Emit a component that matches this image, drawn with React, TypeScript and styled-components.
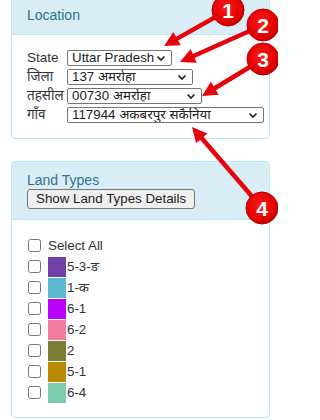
import React from 'react';
import styled, { createGlobalStyle } from 'styled-components';

const GlobalStyle = createGlobalStyle`
  html, body {
    margin: 0;
    padding: 0;
    background: #fff;
  }
  body {
    font-family: "Liberation Sans", Arial, "Noto Sans", sans-serif;
    font-size: 13px;
    color: #333;
  }
`;

const Page = styled.div`
  position: relative;
  width: 278px;
  height: 420px;
  overflow: hidden;
  padding-left: 11px;
  box-sizing: border-box;
`;

const Panel = styled.div<{ $top: number }>`
  width: 259px;
  margin-top: ${(p) => p.$top}px;
  border: 1px solid #bce8f1;
  border-radius: 4px;
  background: #fff;
  box-sizing: border-box;
  overflow: hidden;
`;

const PanelHeading = styled.div`
  background: #d9edf7;
  color: #31708f;
  border-bottom: 1px solid #bce8f1;
  padding: 10px 15px 10px 15px;
  font-size: 14px;
  line-height: 17px;
`;

const LocationBody = styled.div`
  padding: 15px 0 15px 15px;
  display: grid;
  grid-template-columns: 40px auto;
  grid-auto-rows: 16px;
  row-gap: 3px;
  align-items: center;
`;

const FieldLabel = styled.span`
  font-size: 13.5px;
  line-height: 16px;
  white-space: nowrap;
  color: #333;
`;

const SelectBox = styled.div<{ $w: number }>`
  width: ${(p) => p.$w}px;
  height: 16px;
  box-sizing: border-box;
  border: 1px solid #767676;
  border-radius: 2px;
  background: #fff;
  display: flex;
  align-items: center;
  justify-content: space-between;
  padding: 0 5px 0 4px;
  font-size: 13.33px;
  line-height: 14px;
  color: #222;
  white-space: nowrap;
  overflow: hidden;
`;

const Chevron = () => (
  <svg width="10" height="7" viewBox="0 0 10 7">
    <path d="M1.5 1.5 L5 5 L8.5 1.5" fill="none" stroke="#222" strokeWidth="1.7" />
  </svg>
);

const DetailsButton = styled.button`
  display: block;
  margin-top: 0;
  height: 20px;
  padding: 0 8px;
  border: 1px solid #767676;
  border-radius: 3px;
  background: #efefef;
  color: #222;
  font-family: inherit;
  font-size: 13.33px;
  line-height: 18px;
`;

const TypesBody = styled.div`
  padding: 15px 0 14px 16px;
  display: flex;
  flex-direction: column;
`;

const TypeRow = styled.div`
  display: flex;
  align-items: center;
  height: 21px;
  font-size: 13.33px;
  line-height: 16px;
  color: #333;
`;

const CheckBox = styled.span`
  width: 13px;
  height: 13px;
  box-sizing: border-box;
  border: 1px solid #767676;
  border-radius: 2.5px;
  background: #fff;
  margin-right: 7px;
  flex: none;
`;

const Swatch = styled.span<{ $color: string }>`
  width: 18px;
  height: 20px;
  background: ${(p) => p.$color};
  margin-right: 1px;
  flex: none;
`;

const Overlay = styled.svg`
  position: absolute;
  left: 0;
  top: 0;
  pointer-events: none;
`;

const locations = [
  { label: 'State', value: 'Uttar Pradesh', w: 105 },
  { label: 'जिला', value: '137 अमरोहा', w: 126 },
  { label: 'तहसील', value: '00730 अमरोहा', w: 135 },
  { label: 'गाँव', value: '117944 अकबरपुर सकैनिया', w: 197 },
];

const landTypes = [
  { name: '5-3-ङ', color: '#6f42a8' },
  { name: '1-क', color: '#5bbad0' },
  { name: '6-1', color: '#b800ff' },
  { name: '6-2', color: '#f27ba2' },
  { name: '2', color: '#7a7d32' },
  { name: '5-1', color: '#b98900' },
  { name: '6-4', color: '#7dcbad' },
];

const callouts = [
  { n: '1', cx: 228, cy: 10, tx: 164, ty: 46 },
  { n: '2', cx: 263, cy: 25, tx: 180, ty: 62 },
  { n: '3', cx: 263, cy: 59, tx: 202, ty: 96 },
  { n: '4', cx: 262, cy: 208, tx: 192, ty: 127 },
];

function Callout({ n, cx, cy, tx, ty }: { n: string; cx: number; cy: number; tx: number; ty: number }) {
  const dx = tx - cx;
  const dy = ty - cy;
  const len = Math.hypot(dx, dy);
  const ux = dx / len;
  const uy = dy / len;
  const headLen = 15;
  const half = 7.5;
  const bx = tx - ux * headLen;
  const by = ty - uy * headLen;
  const p1 = `${bx - uy * half},${by + ux * half}`;
  const p2 = `${bx + uy * half},${by - ux * half}`;
  return (
    <g>
      <line x1={cx} y1={cy} x2={bx + ux * 2} y2={by + uy * 2} stroke="#e8000b" strokeWidth="4.5" />
      <polygon points={`${tx},${ty} ${p1} ${p2}`} fill="#e8000b" />
      <circle cx={cx} cy={cy} r="16" fill="url(#badge)" stroke="#b80000" strokeWidth="1" />
      <text
        x={cx}
        y={cy + 7.5}
        textAnchor="middle"
        fill="#fff"
        fontFamily='"Liberation Sans", Arial, sans-serif'
        fontWeight="bold"
        fontSize="21"
      >
        {n}
      </text>
    </g>
  );
}

export default function App() {
  return (
    <>
      <GlobalStyle />
      <Page>
        <Panel $top={-4}>
          <PanelHeading>Location</PanelHeading>
          <LocationBody>
            {locations.map((l) => (
              <React.Fragment key={l.label}>
                <FieldLabel>{l.label}</FieldLabel>
                <SelectBox $w={l.w}>
                  <span>{l.value}</span>
                  <Chevron />
                </SelectBox>
              </React.Fragment>
            ))}
          </LocationBody>
        </Panel>
        <Panel $top={22}>
          <PanelHeading>
            Land Types
            <DetailsButton>Show Land Types Details</DetailsButton>
          </PanelHeading>
          <TypesBody>
            <TypeRow>
              <CheckBox />
              Select All
            </TypeRow>
            {landTypes.map((t) => (
              <TypeRow key={t.name}>
                <CheckBox />
                <Swatch $color={t.color} />
                {t.name}
              </TypeRow>
            ))}
          </TypesBody>
        </Panel>
        <Overlay width="278" height="420" viewBox="0 0 278 420">
          <defs>
            <radialGradient id="badge" cx="0.45" cy="0.4" r="0.6">
              <stop offset="0" stopColor="#ff1a1a" />
              <stop offset="0.8" stopColor="#e00000" />
              <stop offset="1" stopColor="#c00000" />
            </radialGradient>
          </defs>
          {callouts.map((c) => (
            <Callout key={c.n} {...c} />
          ))}
        </Overlay>
      </Page>
    </>
  );
}
